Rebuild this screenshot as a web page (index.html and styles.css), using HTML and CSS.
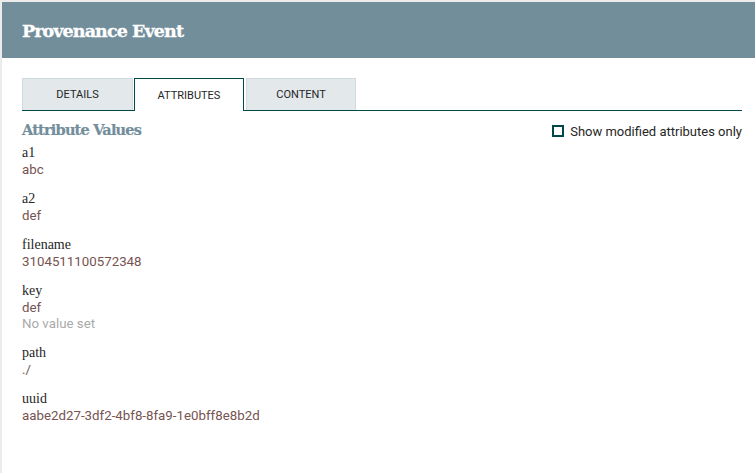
FILE: index.html
```html
<!DOCTYPE html>
<html>
<head>
<meta charset="utf-8">
<link rel="stylesheet" href="styles.css">
</head>
<body>
<div class="backdrop">
  <div class="dialog">
    <div class="dialog-header">Provenance Event</div>
    <div class="dialog-body">
      <div class="tabs">
        <div class="tab">DETAILS</div>
        <div class="tab active">ATTRIBUTES</div>
        <div class="tab">CONTENT</div>
      </div>
      <div class="section-head">
        <div class="section-title">Attribute Values</div>
        <label class="modified-toggle"><span class="checkbox"></span>Show modified attributes only</label>
      </div>
      <div class="attr">
        <div class="attr-name">a1</div>
        <div class="attr-value">abc</div>
      </div>
      <div class="attr">
        <div class="attr-name">a2</div>
        <div class="attr-value">def</div>
      </div>
      <div class="attr">
        <div class="attr-name">filename</div>
        <div class="attr-value">3104511100572348</div>
      </div>
      <div class="attr">
        <div class="attr-name">key</div>
        <div class="attr-value">def</div>
        <div class="attr-value unset">No value set</div>
      </div>
      <div class="attr">
        <div class="attr-name">path</div>
        <div class="attr-value">./</div>
      </div>
      <div class="attr">
        <div class="attr-name">uuid</div>
        <div class="attr-value">aabe2d27-3df2-4bf8-8fa9-1e0bff8e8b2d</div>
      </div>
    </div>
  </div>
</div>
</body>
</html>
```
FILE: styles.css
```css
html, body {
  margin: 0;
  padding: 0;
  height: 100%;
  overflow: hidden;
}
.backdrop {
  background: #ececec;
  padding: 2px 0 0 2px;
  height: 100%;
  box-sizing: border-box;
}
.dialog {
  background: #ffffff;
  height: 100%;
}
.dialog-header {
  background: #728e9b;
  color: #ffffff;
  height: 56px;
  box-sizing: border-box;
  padding: 18px 0 0 20px;
  font-family: "DejaVu Serif", serif;
  font-weight: bold;
  font-size: 17.5px;
  letter-spacing: -0.9px;
  line-height: 22px;
  -webkit-text-stroke: 0.3px #ffffff;
}
.dialog-body {
  padding: 20px 13px 0 20px;
  font-family: Roboto, "Liberation Sans", sans-serif;
}
.tabs {
  display: flex;
  border-bottom: 1px solid #004849;
  height: 32px;
}
.tab {
  width: 110px;
  height: 32px;
  box-sizing: border-box;
  background: #e3e8eb;
  border: 1px solid #d0dbe0;
  border-bottom: none;
  margin-right: 1px;
  font-size: 11px;
  color: #262626;
  display: flex;
  align-items: center;
  justify-content: center;
}
.tab:first-child {
  width: 111px;
}
.tab.active {
  background: #ffffff;
  border: 1px solid #004849;
  border-bottom: none;
  height: 33px;
  margin-right: 2px;
}
.section-head {
  display: flex;
  justify-content: space-between;
  align-items: center;
  margin-top: 8px;
  height: 20px;
  margin-bottom: 5px;
}
.section-title {
  font-family: "DejaVu Serif", serif;
  font-weight: bold;
  font-size: 14.5px;
  letter-spacing: -0.8px;
  color: #728e9b;
  -webkit-text-stroke: 0.2px #728e9b;
}
.modified-toggle {
  display: flex;
  align-items: center;
  font-size: 13px;
  color: #262626;
  margin-top: 4px;
}
.checkbox {
  width: 12px;
  height: 12px;
  box-sizing: border-box;
  border: 2px solid #004849;
  margin-right: 6px;
}
.attr {
  margin-top: 2px;
  margin-bottom: 12px;
}
.attr-name {
  font-family: "Liberation Serif", serif;
  font-size: 14px;
  line-height: 17px;
  color: #262626;
}
.attr-value {
  font-size: 13.3px;
  line-height: 17px;
  color: #775351;
}
.attr-value.unset {
  color: #aaaaaa;
  line-height: 16px;
}
```
